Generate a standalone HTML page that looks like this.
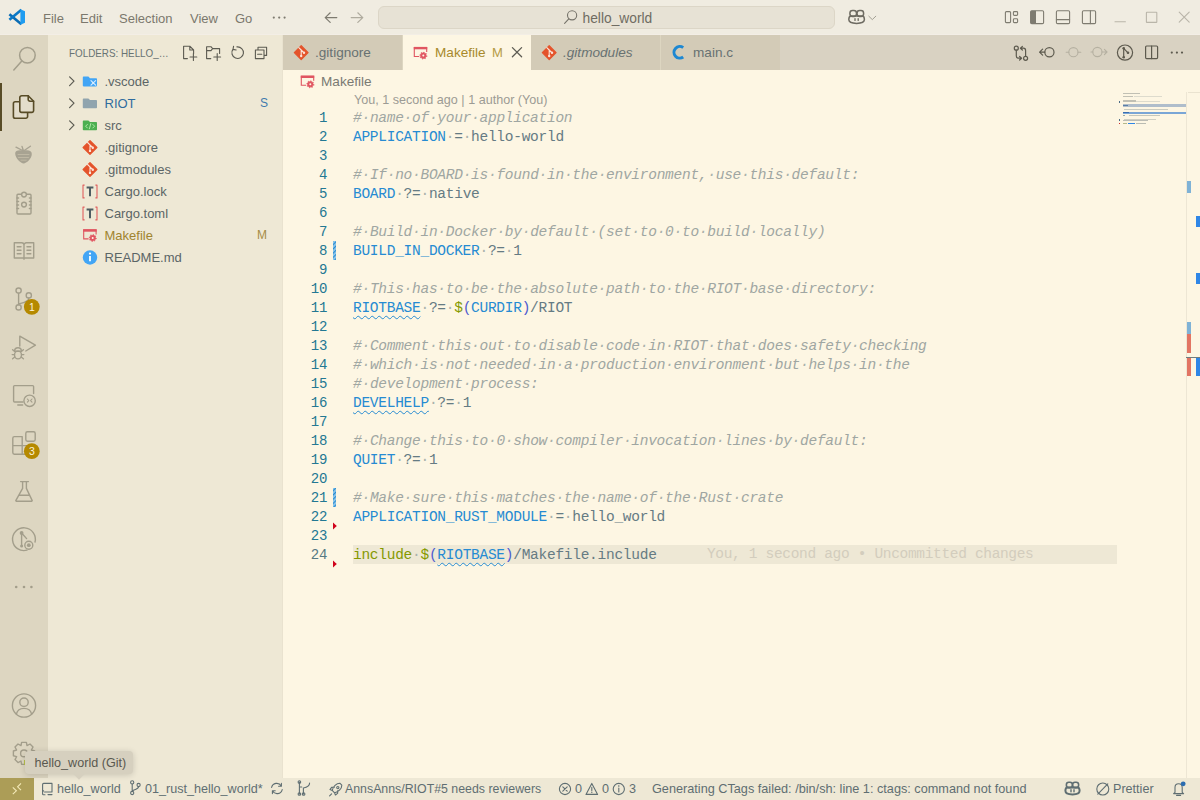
<!DOCTYPE html>
<html><head><meta charset="utf-8">
<style>
*{box-sizing:border-box;margin:0;padding:0}
html,body{width:1200px;height:800px;overflow:hidden;background:#FDF6E3;font-family:"Liberation Sans",sans-serif}
.a{position:absolute}
.t{position:absolute;white-space:pre;line-height:1;z-index:8}
svg{position:absolute;overflow:visible}
#title{left:0;top:0;width:1200px;height:35px;background:#F0ECE1;border-bottom:1px solid #F3EEE6}
.menu{color:#7B786D;font-size:13px;top:12px}
#act{left:0;top:35px;width:48px;height:743px;background:#DDD6C1}
#side{left:48px;top:35px;width:235px;height:743px;background:#EEE8D5;border-right:1px solid #E9E2CF}
#tabs{left:283px;top:35px;width:917px;height:35px;background:#D9D2C2}
.tab{position:absolute;top:0;height:35px;background:#D3CBB7;border-right:1px solid #DDD6C1}
.tabtxt{font-size:13.6px;color:#687272;top:11px}
#ed{left:283px;top:70px;width:917px;height:708px;background:#FDF6E3}
#status{left:0;top:778px;width:1200px;height:22px;background:#EEE8D5}
.st{font-size:12.6px;color:#5F6E72;top:5px}
.rowt{font-size:13px;color:#5B6566;left:56.5px}
.code{position:absolute;left:353px;font-family:"Liberation Mono",monospace;font-size:14.5px;line-height:19px;height:19px;white-space:pre;color:#657B83;letter-spacing:-0.27px}
.ln{position:absolute;left:290px;width:37.5px;text-align:right;font-family:"Liberation Mono",monospace;font-size:14px;line-height:19px;height:19px;color:#237893}
.ln.act{color:#567983}
.c{color:#9FA6A2;font-style:italic}
.v,.vu{color:#268BD2}
.vu{text-decoration:underline wavy #268BD2;text-decoration-thickness:1px;text-underline-offset:3px}
.w{color:#AAB2AC}
.wc{font-style:italic}
.g{color:#859900}
.p{color:#4D5BCF}
.o{color:#657B83}
</style></head><body>
<div id="title" class="a">
  <div class="t menu" style="left:43px">File</div>
  <div class="t menu" style="left:80px">Edit</div>
  <div class="t menu" style="left:119px">Selection</div>
  <div class="t menu" style="left:190px">View</div>
  <div class="t menu" style="left:235px">Go</div>
  <div class="a" style="left:378px;top:6px;width:457px;height:23px;background:#E7E2D5;border:1px solid #DCD6C7;border-radius:6px"></div>
  <div class="t" style="left:582.5px;top:12.3px;font-size:13.8px;color:#6F6C62">hello_world</div>
</div>
<div id="act" class="a">
  <div class="a" style="left:0;top:48px;width:2px;height:48px;background:#584C27"></div>
</div>
<div id="side" class="a">
  <div class="t" style="left:20.5px;top:13px;font-size:11.2px;transform:scaleX(0.88);transform-origin:0 0;color:#687373">FOLDERS: HELLO_…</div>
  <div class="t rowt" style="top:40px">.vscode</div>
  <div class="t rowt" style="top:62px;color:#2F6C9E">RIOT</div>
  <div class="t rowt" style="top:84px">src</div>
  <div class="t rowt" style="top:106px">.gitignore</div>
  <div class="t rowt" style="top:128px">.gitmodules</div>
  <div class="t rowt" style="top:150px">Cargo.lock</div>
  <div class="t rowt" style="top:172px">Cargo.toml</div>
  <div class="t rowt" style="top:194px;color:#A0842F">Makefile</div>
  <div class="t rowt" style="top:216px">README.md</div>
  <div class="t rowt" style="top:62px;left:212px;color:#3F7BAE;font-size:12px">S</div>
  <div class="t rowt" style="top:194px;left:209px;color:#A68C45;font-size:12px">M</div>
</div>
<div id="tabs" class="a">
  <div class="tab" style="left:0;width:120px"><div class="t tabtxt" style="left:32px">.gitignore</div></div>
  <div class="tab" style="left:120px;width:128px;background:#FDF6E3;border-right:none"><div class="t tabtxt" style="left:32px;color:#A88A2C">Makefile</div><div class="t tabtxt" style="left:89px;color:#B59A45;font-size:13px">M</div></div>
  <div class="tab" style="left:248px;width:130px"><div class="t tabtxt" style="left:32px;font-style:italic">.gitmodules</div></div>
  <div class="tab" style="left:378px;width:119px;border-right:none"><div class="t tabtxt" style="left:32px">main.c</div></div>
</div>
<div id="ed" class="a">
  <div class="t" style="left:38px;top:4.5px;font-size:13.6px;color:#7A7A73">Makefile</div>
  <div class="t" style="left:71px;top:24px;font-size:12.6px;color:#9C9B94">You, 1 second ago | 1 author (You)</div>
  <div class="a" style="left:70px;top:475px;width:764px;height:19px;background:#EEE8D5"></div>
</div>
<div class="ln" style="top:109.0px">1</div>
<div class="code" style="top:109.0px"><span class="c">#</span><span class="w wc">·</span><span class="c">name</span><span class="w wc">·</span><span class="c">of</span><span class="w wc">·</span><span class="c">your</span><span class="w wc">·</span><span class="c">application</span></div>
<div class="ln" style="top:128.0px">2</div>
<div class="code" style="top:128.0px"><span class="v">APPLICATION</span><span class="w">·</span><span class="o">=</span><span class="w">·</span><span class="o">hello-world</span></div>
<div class="ln" style="top:147.0px">3</div>
<div class="ln" style="top:166.0px">4</div>
<div class="code" style="top:166.0px"><span class="c">#</span><span class="w wc">·</span><span class="c">If</span><span class="w wc">·</span><span class="c">no</span><span class="w wc">·</span><span class="c">BOARD</span><span class="w wc">·</span><span class="c">is</span><span class="w wc">·</span><span class="c">found</span><span class="w wc">·</span><span class="c">in</span><span class="w wc">·</span><span class="c">the</span><span class="w wc">·</span><span class="c">environment,</span><span class="w wc">·</span><span class="c">use</span><span class="w wc">·</span><span class="c">this</span><span class="w wc">·</span><span class="c">default:</span></div>
<div class="ln" style="top:185.0px">5</div>
<div class="code" style="top:185.0px"><span class="v">BOARD</span><span class="w">·</span><span class="o">?=</span><span class="w">·</span><span class="o">native</span></div>
<div class="ln" style="top:204.0px">6</div>
<div class="ln" style="top:223.0px">7</div>
<div class="code" style="top:223.0px"><span class="c">#</span><span class="w wc">·</span><span class="c">Build</span><span class="w wc">·</span><span class="c">in</span><span class="w wc">·</span><span class="c">Docker</span><span class="w wc">·</span><span class="c">by</span><span class="w wc">·</span><span class="c">default</span><span class="w wc">·</span><span class="c">(set</span><span class="w wc">·</span><span class="c">to</span><span class="w wc">·</span><span class="c">0</span><span class="w wc">·</span><span class="c">to</span><span class="w wc">·</span><span class="c">build</span><span class="w wc">·</span><span class="c">locally)</span></div>
<div class="ln" style="top:242.0px">8</div>
<div class="code" style="top:242.0px"><span class="v">BUILD_IN_DOCKER</span><span class="w">·</span><span class="o">?=</span><span class="w">·</span><span class="o">1</span></div>
<div class="ln" style="top:261.0px">9</div>
<div class="ln" style="top:280.0px">10</div>
<div class="code" style="top:280.0px"><span class="c">#</span><span class="w wc">·</span><span class="c">This</span><span class="w wc">·</span><span class="c">has</span><span class="w wc">·</span><span class="c">to</span><span class="w wc">·</span><span class="c">be</span><span class="w wc">·</span><span class="c">the</span><span class="w wc">·</span><span class="c">absolute</span><span class="w wc">·</span><span class="c">path</span><span class="w wc">·</span><span class="c">to</span><span class="w wc">·</span><span class="c">the</span><span class="w wc">·</span><span class="c">RIOT</span><span class="w wc">·</span><span class="c">base</span><span class="w wc">·</span><span class="c">directory:</span></div>
<div class="ln" style="top:299.0px">11</div>
<div class="code" style="top:299.0px"><span class="vu">RIOTBASE</span><span class="w">·</span><span class="o">?=</span><span class="w">·</span><span class="g">$</span><span class="p">(</span><span class="v">CURDIR</span><span class="p">)</span><span class="o">/RIOT</span></div>
<div class="ln" style="top:318.0px">12</div>
<div class="ln" style="top:337.0px">13</div>
<div class="code" style="top:337.0px"><span class="c">#</span><span class="w wc">·</span><span class="c">Comment</span><span class="w wc">·</span><span class="c">this</span><span class="w wc">·</span><span class="c">out</span><span class="w wc">·</span><span class="c">to</span><span class="w wc">·</span><span class="c">disable</span><span class="w wc">·</span><span class="c">code</span><span class="w wc">·</span><span class="c">in</span><span class="w wc">·</span><span class="c">RIOT</span><span class="w wc">·</span><span class="c">that</span><span class="w wc">·</span><span class="c">does</span><span class="w wc">·</span><span class="c">safety</span><span class="w wc">·</span><span class="c">checking</span></div>
<div class="ln" style="top:356.0px">14</div>
<div class="code" style="top:356.0px"><span class="c">#</span><span class="w wc">·</span><span class="c">which</span><span class="w wc">·</span><span class="c">is</span><span class="w wc">·</span><span class="c">not</span><span class="w wc">·</span><span class="c">needed</span><span class="w wc">·</span><span class="c">in</span><span class="w wc">·</span><span class="c">a</span><span class="w wc">·</span><span class="c">production</span><span class="w wc">·</span><span class="c">environment</span><span class="w wc">·</span><span class="c">but</span><span class="w wc">·</span><span class="c">helps</span><span class="w wc">·</span><span class="c">in</span><span class="w wc">·</span><span class="c">the</span></div>
<div class="ln" style="top:375.0px">15</div>
<div class="code" style="top:375.0px"><span class="c">#</span><span class="w wc">·</span><span class="c">development</span><span class="w wc">·</span><span class="c">process:</span></div>
<div class="ln" style="top:394.0px">16</div>
<div class="code" style="top:394.0px"><span class="vu">DEVELHELP</span><span class="w">·</span><span class="o">?=</span><span class="w">·</span><span class="o">1</span></div>
<div class="ln" style="top:413.0px">17</div>
<div class="ln" style="top:432.0px">18</div>
<div class="code" style="top:432.0px"><span class="c">#</span><span class="w wc">·</span><span class="c">Change</span><span class="w wc">·</span><span class="c">this</span><span class="w wc">·</span><span class="c">to</span><span class="w wc">·</span><span class="c">0</span><span class="w wc">·</span><span class="c">show</span><span class="w wc">·</span><span class="c">compiler</span><span class="w wc">·</span><span class="c">invocation</span><span class="w wc">·</span><span class="c">lines</span><span class="w wc">·</span><span class="c">by</span><span class="w wc">·</span><span class="c">default:</span></div>
<div class="ln" style="top:451.0px">19</div>
<div class="code" style="top:451.0px"><span class="v">QUIET</span><span class="w">·</span><span class="o">?=</span><span class="w">·</span><span class="o">1</span></div>
<div class="ln" style="top:470.0px">20</div>
<div class="ln" style="top:489.0px">21</div>
<div class="code" style="top:489.0px"><span class="c">#</span><span class="w wc">·</span><span class="c">Make</span><span class="w wc">·</span><span class="c">sure</span><span class="w wc">·</span><span class="c">this</span><span class="w wc">·</span><span class="c">matches</span><span class="w wc">·</span><span class="c">the</span><span class="w wc">·</span><span class="c">name</span><span class="w wc">·</span><span class="c">of</span><span class="w wc">·</span><span class="c">the</span><span class="w wc">·</span><span class="c">Rust</span><span class="w wc">·</span><span class="c">crate</span></div>
<div class="ln" style="top:508.0px">22</div>
<div class="code" style="top:508.0px"><span class="v">APPLICATION_RUST_MODULE</span><span class="w">·</span><span class="o">=</span><span class="w">·</span><span class="o">hello_world</span></div>
<div class="ln" style="top:527.0px">23</div>
<div class="ln act" style="top:546.0px">24</div>
<div class="code" style="top:546.0px"><span class="g">include</span><span class="w">·</span><span class="g">$</span><span class="p">(</span><span class="vu">RIOTBASE</span><span class="p">)</span><span class="o">/Makefile.include</span></div>
<svg class="a" style="left:0;top:0;z-index:5" width="1200" height="800" fill="none" stroke-linecap="round" stroke-linejoin="round">
<g stroke="#A39E8B" stroke-width="1.5">
 <!-- search -->
 <circle cx="27.4" cy="55.3" r="7.8"/>
 <path d="M21.8,60.9 L13.8,69.9"/>
</g>
<!-- explorer -->
<g stroke="#584C27" stroke-width="1.6" fill="#E3DDCB">
 <path d="M19.8,101.8 H15.2 a1.8,1.8 0 0 0 -1.8,1.8 V116.4 a1.8,1.8 0 0 0 1.8,1.8 H25.8 a1.8,1.8 0 0 0 1.8,-1.8 V112.4"/>
 <path d="M21.6,95.8 H28.2 L33.6,101.2 V110.6 a1.8,1.8 0 0 1 -1.8,1.8 H21.6 a1.8,1.8 0 0 1 -1.8,-1.8 V97.6 a1.8,1.8 0 0 1 1.8,-1.8 Z"/>
 <path d="M28.2,95.8 V99.4 a1.8,1.8 0 0 0 1.8,1.8 H33.6" fill="none"/>
</g>
<!-- strawberry -->
<g fill="#A8A392" stroke="none">
 <path d="M15.2,153.2 C15.2,150.4 18.6,149.6 23.4,150.6 C28.2,149.6 31.8,150.2 31.8,154 C31.8,158.8 26.4,163.4 23.6,163.4 C20.8,163.4 15.2,158.4 15.2,153.2 Z"/>
</g>
<g stroke="#A8A392" stroke-width="1.4">
 <path d="M23.5,151 L16,147.2 M23.5,151 L22,146.4 M23.5,151 L30.4,146.2"/>
</g>
<g stroke="#C8C1AC" stroke-width="0.7">
 <path d="M18,154.5 L29,154.5 M18.5,157.5 L28.5,157.5 M21,160.2 L26.2,160.2"/>
</g>
<g stroke="#A39E8B" stroke-width="1.4">
 <!-- ruler clipboard -->
 <rect x="17" y="194.2" width="14" height="19.8" rx="1"/>
 <circle cx="24" cy="194.6" r="2.4" fill="#DDD6C1"/>
 <circle cx="24" cy="204.6" r="2.4"/>
 <path d="M17,198 h1.6 M17,201.5 h1.6 M17,205 h1.6 M17,208.5 h1.6 M31,198 h-1.6 M31,201.5 h-1.6 M31,205 h-1.6 M31,208.5 h-1.6"/>
 <!-- book -->
 <path d="M14.3,242.8 H21.8 a2.2,2.2 0 0 1 2.2,2.2 V258 H14.3 Z M24,245 a2.2,2.2 0 0 1 2.2,-2.2 H33.7 V258 H24 V259.2"/>
 <path d="M17.2,246.8 h3.8 M17.2,250.3 h3.8 M17.2,253.8 h3.8 M27,246.8 h3.8 M27,250.3 h3.8 M27,253.8 h3.8"/>
 <!-- source control -->
 <circle cx="18.6" cy="290.6" r="2.6"/>
 <circle cx="28.8" cy="295.4" r="2.6"/>
 <circle cx="18.6" cy="307.4" r="2.6"/>
 <path d="M18.6,293.2 V304.8 M28.8,298 C28.8,302 24,302.5 18.8,303.8"/>
 <!-- run debug -->
 <path d="M19.8,346 V336.2 L35.4,345.2 L25.8,351"/>
 <ellipse cx="18" cy="355" rx="3.5" ry="3.9"/>
 <path d="M14.6,351.2 a3.4,3.4 0 0 1 6.8,0 Z M12.6,349.8 l2,1.6 M23.4,349.8 l-2,1.6 M12.2,354.6 h2.3 M21.5,354.6 h2.3 M12.6,358.8 l2.2,-1.8 M23.4,358.8 l-2.2,-1.8"/>
 <!-- remote explorer -->
 <path d="M23,402 H14.6 a1,1 0 0 1 -1,-1 V386.6 a1,1 0 0 1 1,-1 H32.6 a1,1 0 0 1 1,1 V393.6"/>
 <path d="M17.8,405 H22.6"/>
 <circle cx="29.6" cy="400.8" r="5.7" fill="#DDD6C1"/>
 <path d="M27.4,399 l1.4,1.6 l-1.4,1.6 M32,399 l-1.4,1.6 l1.4,1.6" stroke-width="1.1"/>
 <!-- extensions -->
 <path d="M22.2,436.6 H14.4 a1.6,1.6 0 0 0 -1.6,1.6 V452.6 a1.6,1.6 0 0 0 1.6,1.6 H29 M12.8,445.6 H30 M22.2,436.6 V454.2"/>
 <rect x="25.8" y="431.8" width="9.4" height="9.4" rx="1.6"/>
 <!-- flask -->
 <path d="M20.6,481.6 H28.4 M22.6,481.6 V488.4 L15.8,500.6 a0.5,0.5 0 0 0 0.4,0.6 H31.8 a0.5,0.5 0 0 0 0.4,-0.6 L26.4,488.4 V481.6 M18.8,495.2 H29.2"/>
 <!-- gitlens -->
 <path d="M35,542 A11.4,11.4 0 1 0 27,550.2"/>
 <path d="M21.6,533 V546 M21.6,533 L26.6,538.6"/>
 <circle cx="28.8" cy="545.2" r="4"/>
</g>
<g fill="#A39E8B">
 <circle cx="21.6" cy="533" r="1.9"/>
 <circle cx="21.6" cy="546" r="1.5"/>
 <circle cx="28.8" cy="545.2" r="1.9"/>
 <circle cx="16.2" cy="587" r="1.3"/><circle cx="24" cy="587" r="1.3"/><circle cx="31.4" cy="587" r="1.3"/>
</g>
<g stroke="#A39E8B" stroke-width="1.4">
 <!-- account -->
 <circle cx="24" cy="705.5" r="11.6"/>
 <circle cx="24" cy="702.2" r="4.2"/>
 <path d="M16.4,714 C17.4,710 20.4,708.4 24,708.4 C27.6,708.4 30.6,710 31.6,714"/>
 <!-- gear -->
 <path d="M21.6,742.4 L26.4,742.4 L27,745.6 L30,744 L33,747 L31.4,750 L34.6,751 V755.8 L31.4,756.6 L33,759.6 L30,762.6 L27,761 L26.4,764.4 H21.6 L21,761 L18,762.6 L15,759.6 L16.6,756.6 L13.4,755.8 V751 L16.6,750 L15,747 L18,744 L21,745.6 Z"/>
 <circle cx="24" cy="753.4" r="3.4"/>
</g>
<!-- badges -->
<circle cx="31.8" cy="306.8" r="7.9" fill="#B58900"/>
<circle cx="31.8" cy="451.2" r="7.9" fill="#B58900"/>
<text x="31.8" y="310.6" font-family="Liberation Sans" font-size="10.5" fill="#FBF3DC" text-anchor="middle">1</text>
<text x="31.8" y="455" font-family="Liberation Sans" font-size="10.5" fill="#FBF3DC" text-anchor="middle">3</text>
</svg>

<svg class="a" style="left:0;top:0;z-index:6" width="1200" height="800" fill="none" stroke-linecap="round" stroke-linejoin="round">
<!-- vscode logo -->
<path d="M9.4,14.2 L21.4,24.2" stroke="#0A6CB4" stroke-width="2.6" stroke-linecap="butt"/>
<path d="M9.4,19.8 L21.4,9.8" stroke="#0B78C6" stroke-width="2.6" stroke-linecap="butt"/>
<path d="M20.4,9.2 L25,11.2 V22.8 L20.4,24.8 Z" fill="#1F9CF0"/>
<!-- back/forward -->
<path d="M336.8,17.6 H325.2 M330.2,12.8 L325.2,17.6 L330.2,22.4" stroke="#7E7B70" stroke-width="1.2"/>
<path d="M351.2,17.6 H362.8 M357.8,12.8 L362.8,17.6 L357.8,22.4" stroke="#AFAB9E" stroke-width="1.2"/>
<!-- menu dots -->
<g fill="#7E7B70"><circle cx="273.8" cy="17.6" r="1.1"/><circle cx="279.2" cy="17.6" r="1.1"/><circle cx="284.6" cy="17.6" r="1.1"/></g>
<!-- search in command center -->
<circle cx="572.1" cy="15.3" r="4.6" stroke="#76736A" stroke-width="1.1"/>
<path d="M568.8,18.8 L564.6,23.4" stroke="#76736A" stroke-width="1.1"/>
<!-- copilot -->
<g stroke="#6E6B62" stroke-width="1.5">
<rect x="849.9" y="10.6" width="6.6" height="5.8" rx="2.6"/>
<rect x="857" y="10.6" width="6.6" height="5.8" rx="2.6"/>
<path d="M848.8,19.6 C848.8,17 849.8,16 851.2,16 H862.2 C863.6,16 864.4,17 864.4,19.6 C864.4,22.4 860.6,23.4 856.6,23.4 C852.6,23.4 848.8,22.4 848.8,19.6 Z"/>
<path d="M855,18.6 V20.4 M858.2,18.6 V20.4" stroke-width="1.3"/>
</g>
<path d="M868.8,16.2 L872.3,19.6 L875.8,16.2" stroke="#A29F93" stroke-width="1"/>
<!-- layout icons -->
<g stroke="#7E7B70" stroke-width="1.1">
<rect x="1005.4" y="11.6" width="5.2" height="11" rx="1"/>
<rect x="1013.4" y="11.6" width="4.2" height="3.8" rx="0.9"/>
<rect x="1013.4" y="18.8" width="4.2" height="3.8" rx="0.9"/>
<rect x="1030.6" y="10.8" width="13" height="12.8" rx="1.2"/>
<rect x="1056.4" y="10.8" width="13.2" height="12.8" rx="1.2"/>
<path d="M1056.4,19.6 H1069.6"/>
<rect x="1082.4" y="10.8" width="13.2" height="12.8" rx="1.2"/>
<path d="M1090.4,10.8 V23.6"/>
</g>
<path d="M1030.6,12 a1.2,1.2 0 0 1 1.2,-1.2 H1036 V23.6 H1031.8 a1.2,1.2 0 0 1 -1.2,-1.2 Z" fill="#7E7B70"/>
<!-- window controls -->
<g stroke="#B9B5A9" stroke-width="1.1">
<path d="M1115,21.8 H1125.4"/>
<rect x="1146.4" y="12.2" width="10.4" height="10.2" rx="0.5"/>
<path d="M1179.2,12.2 L1189.2,22.2 M1189.2,12.2 L1179.2,22.2"/>
</g>
<!-- sidebar title icons -->
<g stroke="#5C5B52" stroke-width="1.1">
<path d="M187.4,58.6 H183.6 V46.2 H189.8 L193.6,50 V53.4 M189.8,46.2 V50 H193.6"/>
<path d="M193.4,53.6 V60.4 M190,57 H196.8"/>
<path d="M210.8,58.6 H206.6 V46.8 H211.2 L212.6,48.6 H219.6 V53.4 M206.6,50.6 H211 L212.6,48.6"/>
<path d="M217.2,53.6 V60.4 M213.8,57 H220.6"/>
<path d="M233,49.2 A5.8,5.8 0 1 0 236.9,46.9 M233.6,46.2 L233,49.4 L236.2,50"/>
<path d="M258,50 V47.2 H266.6 V55.4 H264 M255.4,50 H264 V58.6 H255.4 Z M257.6,54.3 H261.8"/>
</g>
<!-- chevrons -->
<g stroke="#5C5B52" stroke-width="1.2">
<path d="M69.6,76.8 L74,81.2 L69.6,85.6"/>
<path d="M69.6,98.8 L74,103.2 L69.6,107.6"/>
<path d="M69.6,120.8 L74,125.2 L69.6,129.6"/>
</g>
<!-- folders -->
<path d="M82.8,77.4 a0.8,0.8 0 0 1 0.8,-0.8 H88.4 L90,78.2 H96.2 a0.8,0.8 0 0 1 0.8,0.8 V85.6 a0.8,0.8 0 0 1 -0.8,0.8 H83.6 a0.8,0.8 0 0 1 -0.8,-0.8 Z" fill="#42A5F5"/>
<path d="M91,80.6 L95.6,85.2 M95.6,80.6 L91,85.2" stroke="#D6ECFF" stroke-width="1.2"/>
<path d="M82.8,99.2 a0.8,0.8 0 0 1 0.8,-0.8 H88.4 L90,100 H96.2 a0.8,0.8 0 0 1 0.8,0.8 V107.4 a0.8,0.8 0 0 1 -0.8,0.8 H83.6 a0.8,0.8 0 0 1 -0.8,-0.8 Z" fill="#90A4AE"/>
<path d="M82.8,121.2 a0.8,0.8 0 0 1 0.8,-0.8 H88.4 L90,122 H96.2 a0.8,0.8 0 0 1 0.8,0.8 V129.4 a0.8,0.8 0 0 1 -0.8,0.8 H83.6 a0.8,0.8 0 0 1 -0.8,-0.8 Z" fill="#4CAF50"/>
<path d="M87.4,124.4 L85.6,126.2 L87.4,128 M90.8,123.6 L89.4,128.8 M92.8,124.4 L94.6,126.2 L92.8,128" stroke="#B9F0B0" stroke-width="0.9"/>
<!-- file icons sidebar -->
<defs>
<g id="git">
 <path d="M0,-6.9 L6.9,0 L0,6.9 L-6.9,0 Z" fill="#E4532B" stroke="#E4532B" stroke-width="1.2" stroke-linejoin="round"/>
 <path d="M-2.4,-5 L0,-2.6 V3.2 M0,-2.6 L2.6,0" stroke="#FCE3D8" stroke-width="1.1"/>
 <circle cx="0" cy="3.4" r="1.2" fill="#FCE3D8"/>
 <circle cx="2.8" cy="0.2" r="1.2" fill="#FCE3D8"/>
</g>
<g id="toml">
 <path d="M-5.4,-6.4 H-7 V6.4 H-5.4 M5.4,-6.4 H7 V6.4 H5.4" stroke="#E06060" stroke-width="1.1" stroke-linecap="butt"/>
 <path d="M-3.4,-4 H3.4 M0,-4 V4.8" stroke="#4E5D62" stroke-width="2" stroke-linecap="butt"/>
</g>
<g id="make">
 <path d="M-1.4,3.4 H-6.3 V-5.6 H6.1 V-1" stroke="#E05561" stroke-width="1.1" stroke-linecap="butt" stroke-linejoin="miter"/>
 <path d="M-6.8,-6.2 H6.6 V-3.8 H-6.8 Z" fill="#E05561"/>
 <path d="M6.33,3.22 L4.86,3.94 L4.76,5.58 L3.21,5.05 L1.98,6.13 L1.26,4.66 L-0.38,4.56 L0.15,3.01 L-0.93,1.78 L0.54,1.06 L0.64,-0.58 L2.19,-0.05 L3.42,-1.13 L4.14,0.34 L5.78,0.44 L5.25,1.99 Z" fill="#E05561" stroke="#E05561" stroke-width="0.6"/>
 <circle cx="2.7" cy="2.5" r="1" fill="#FDF6E3"/>
</g>
</defs>
<use href="#git" x="90" y="147.5"/>
<use href="#git" x="90" y="169.5"/>
<use href="#toml" x="90" y="191.5"/>
<use href="#toml" x="90" y="213.5"/>
<use href="#make" x="90" y="235.5"/>
<circle cx="90" cy="257.5" r="7.2" fill="#42A5F5"/>
<path d="M90,256 V261.2" stroke="#FFFFFF" stroke-width="1.8" stroke-linecap="butt"/>
<circle cx="90" cy="253.6" r="1.1" fill="#FFFFFF"/>
<!-- tabs icons -->
<use href="#git" x="301.2" y="52.6"/>
<use href="#make" x="420.6" y="53.1"/>
<use href="#git" x="549.2" y="52.6"/>
<path d="M683.2,47.6 A5.8,5.8 0 1 0 683.2,57" stroke="#1E88D2" stroke-width="3" stroke-linecap="butt"/>
<path d="M512.4,47.6 L521.6,56.8 M521.6,47.6 L512.4,56.8" stroke="#5E5C53" stroke-width="1.3"/>
<!-- breadcrumb icon -->
<use href="#make" x="307.6" y="81.8"/>
<!-- editor actions -->
<g stroke="#5D5A4E" stroke-width="1.2">
<circle cx="1016.3" cy="48.2" r="2"/>
<circle cx="1025.6" cy="58.3" r="2"/>
<path d="M1016.3,50.2 V56 a2.2,2.2 0 0 0 2.2,2.2 H1021.4 M1019.6,56.4 L1021.6,58.2 L1019.6,60"/>
<path d="M1025.6,56.3 V50.4 a2.2,2.2 0 0 0 -2.2,-2.2 H1020.6 M1022.4,46.4 L1020.4,48.2 L1022.4,50"/>
<circle cx="1049.4" cy="52.2" r="4.6"/>
<path d="M1044.8,52.2 H1039.6 M1042.6,49.2 L1039.6,52.2 L1042.6,55.2"/>
</g>
<g stroke="#B5B0A1" stroke-width="1.1">
<circle cx="1073.4" cy="52.2" r="4.6"/>
<path d="M1068.8,52.2 H1066.2 M1078,52.2 H1080.8"/>
<circle cx="1097.4" cy="52" r="4.6"/>
<path d="M1092.8,52 H1091 M1102,52 H1107 M1104.4,49.4 L1107,52 L1104.4,54.6"/>
</g>
<g stroke="#5D5A4E" stroke-width="1.2">
<circle cx="1125" cy="52.6" r="7.6"/>
<path d="M1123.7,48.3 V57.2 M1123.7,48.3 L1128,52.8"/>
<rect x="1145.6" y="46" width="12" height="12.6" rx="1"/>
<path d="M1151.6,46 V58.6"/>
</g>
<g fill="#5D5A4E">
<circle cx="1123.7" cy="48.3" r="1.3"/><circle cx="1123.7" cy="57.2" r="1.3"/><circle cx="1128" cy="52.8" r="1.3"/>
<circle cx="1171.8" cy="52.6" r="1.1"/><circle cx="1176.9" cy="52.6" r="1.1"/><circle cx="1182" cy="52.6" r="1.1"/>
</g>
<!-- gutter decorations -->
<defs><pattern id="stripe" width="3" height="3" patternUnits="userSpaceOnUse" patternTransform="rotate(-45)"><rect width="3" height="1.6" fill="#268BD2"/><rect y="1.6" width="3" height="1.4" fill="#8EC8EE"/></pattern></defs>
<rect x="333" y="241" width="3" height="19" fill="url(#stripe)"/>
<rect x="333" y="488" width="3" height="19" fill="url(#stripe)"/>
<path d="M333,522.6 L336.8,526 L333,529.4 Z" fill="#D0021B"/>
<path d="M333,560.6 L336.8,564 L333,567.4 Z" fill="#D0021B"/>
<!-- status bar icons -->
<path d="M12.8,787.4 L16.4,790.8 L12.8,794.2 M21,783.4 L17.6,786.8 L21,790.2" stroke="#F4EAB8" stroke-width="1.1" stroke-linecap="butt" stroke-linejoin="miter"/>
<g stroke="#5F6E72" stroke-width="1.1">
<path d="M44.6,792 H52 V783.4 H43.6 a1,1 0 0 0 -1,1 V794 a0.8,0.8 0 0 0 0.8,0.8 H45 M48,794.6 H52 M42.6,791.8 a1,1 0 0 1 1,-0.9"/>
<circle cx="132.2" cy="782.4" r="1.6"/><circle cx="132.2" cy="793" r="1.6"/><circle cx="138.6" cy="785" r="1.6"/>
<path d="M132.2,784 V791.4 M138.6,786.6 C138.6,789.6 134,789 132.4,791"/>
<path d="M271.6,787.4 A5.2,5.2 0 0 1 281.2,786 M282.2,789.6 A5.2,5.2 0 0 1 272.6,791 M281.4,783.4 V786.2 H278.6 M272.4,793.6 V790.8 H275.2"/>
<path d="M299.4,782 V794 M299.4,787 H301.8 M303.4,788 V794 M303.4,788 C307,787.4 309.6,785.6 309.6,783"/>
<circle cx="299.4" cy="782" r="1.3"/><circle cx="299.4" cy="794" r="1.3"/><circle cx="303.6" cy="794" r="1.3"/>
<path d="M339.8,783.2 C336.4,783.2 333,786.4 332.2,790.4 L334.6,792.8 C338.6,792 341.8,788.6 341.8,785.2 Z M332.2,790.4 L330,789.6 L331.6,787.4 L334.4,787.2 M334.6,792.8 L335.4,795 L337.6,793.4 L337.8,790.6 M331.6,793.8 L329.6,795.8"/>
<circle cx="337.8" cy="787.6" r="1.1"/>
<circle cx="565" cy="789" r="5.6"/>
<path d="M562.8,786.8 L567.2,791.2 M567.2,786.8 L562.8,791.2"/>
<path d="M591.8,783.4 L597.6,794.4 H586 Z M591.8,787.4 V790.4"/>
<circle cx="618.8" cy="789" r="5.6"/>
<path d="M618.8,788 V792"/>
<path d="M1097.8,794.2 L1107.8,783.8"/>
<circle cx="1102.8" cy="789" r="6"/>
<path d="M1175,792.4 V787.4 a3.6,3.6 0 0 1 7.2,0 V792.4 L1183.6,793.6 H1173.6 Z M1176.6,795.4 H1180.6"/>
</g>
<g fill="#5F6E72">
<circle cx="591.8" cy="792.2" r="0.7"/>
<circle cx="618.8" cy="786" r="0.8"/>
<circle cx="1183.2" cy="783.8" r="2.4" fill="#2B6CB0"/>
</g>
<!-- status copilot -->
<g stroke="#5F6E72" stroke-width="1.6">
<rect x="1066.4" y="782.2" width="6" height="5.4" rx="2.4"/>
<rect x="1072.6" y="782.2" width="6" height="5.4" rx="2.4"/>
<path d="M1065.4,790.8 C1065.4,788.4 1066.4,787.4 1067.6,787.4 H1077.4 C1078.6,787.4 1079.6,788.4 1079.6,790.8 C1079.6,793.4 1076.2,794.4 1072.5,794.4 C1068.8,794.4 1065.4,793.4 1065.4,790.8 Z" stroke-width="2"/>
</g>
<path d="M1071,789.8 V791.8 M1074,789.8 V791.8" stroke="#5F6E72" stroke-width="1.4"/>
</svg>

<div class="a" style="left:1186px;top:92px;width:1px;height:686px;background:#EDE6D4;z-index:3"></div>
<div class="a" style="left:1187px;top:181px;width:4px;height:12px;background:#7FB2D6;z-index:3"></div>
<div class="a" style="left:1196px;top:216px;width:4px;height:11px;background:#2F86E6;z-index:3"></div>
<div class="a" style="left:1196px;top:272.5px;width:4px;height:11.5px;background:#2F86E6;z-index:3"></div>
<div class="a" style="left:1187px;top:322px;width:4px;height:11.6px;background:#7FB2D6;z-index:3"></div>
<div class="a" style="left:1187px;top:333.6px;width:4px;height:19.3px;background:#E27563;z-index:3"></div>
<div class="a" style="left:1186px;top:356.5px;width:14px;height:1.5px;background:#6F7C80;z-index:3"></div>
<div class="a" style="left:1187px;top:358px;width:4px;height:17.7px;background:#E27563;z-index:3"></div>
<div class="a" style="left:1196px;top:358px;width:4px;height:17.7px;background:#2F86E6;z-index:3"></div>
<!-- minimap -->
<div class="a" style="left:1188px;top:92px;width:12px;height:1px;background:#EAE3D0;z-index:3"></div>
<div class="a" style="left:1122.7px;top:92.5px;width:17px;height:1.2px;background:#9A9C95;opacity:.6;z-index:3"></div>
<div class="a" style="left:1122.7px;top:96px;width:10px;height:1.2px;background:#9A9C95;opacity:.6;z-index:3"></div>
<div class="a" style="left:1134px;top:96.2px;width:28px;height:0.8px;background:#C8C9BE;opacity:.6;z-index:3"></div>
<div class="a" style="left:1122.7px;top:100.4px;width:13px;height:1.2px;background:#9A9C95;opacity:.6;z-index:3"></div>
<div class="a" style="left:1136px;top:100.6px;width:24px;height:0.8px;background:#C8C9BE;opacity:.6;z-index:3"></div>
<div class="a" style="left:1122.7px;top:104.4px;width:63.3px;height:2.4px;background:#AFBDCB;z-index:3"></div>
<div class="a" style="left:1123px;top:104.8px;width:5px;height:1.6px;background:#5B7FA6;z-index:3"></div>
<div class="a" style="left:1124px;top:108.6px;width:44px;height:1.2px;background:#C9CBC0;z-index:3"></div>
<div class="a" style="left:1122.7px;top:111.8px;width:63.3px;height:1.8px;background:#7AA6D6;z-index:3"></div>
<div class="a" style="left:1123px;top:112px;width:6px;height:1.4px;background:#3C6FB0;z-index:3"></div>
<div class="a" style="left:1122.7px;top:114.6px;width:2px;height:1.2px;background:#9AA;z-index:3"></div>
<div class="a" style="left:1129px;top:114.8px;width:31px;height:0.8px;background:#C5C7BC;z-index:3"></div>
<div class="a" style="left:1124px;top:118.6px;width:32px;height:0.8px;background:#CFCFC3;z-index:3"></div>
<div class="a" style="left:1122.7px;top:120px;width:25px;height:1.3px;background:#8F9696;opacity:.6;z-index:3"></div>
<div class="a" style="left:1122.7px;top:122.8px;width:4px;height:1.2px;background:#B5B98A;z-index:3"></div>
<div class="a" style="left:1128px;top:122.6px;width:7px;height:1.5px;background:#2F86E6;z-index:3"></div>
<div class="a" style="left:1136px;top:122.8px;width:10px;height:1px;background:#B9BBB2;z-index:3"></div>
<div class="a" style="left:1118.6px;top:101px;width:1.6px;height:1.8px;background:#4C6C86;z-index:3"></div>
<div class="a" style="left:1118.6px;top:118.8px;width:1.6px;height:1.8px;background:#4C6C86;z-index:3"></div>
<div class="a" style="left:1118.6px;top:122.6px;width:1.6px;height:1.6px;background:#D02A2A;z-index:3"></div>

<div class="code" style="top:545.3px;left:707px;color:#D3CDBD;letter-spacing:-0.33px">You, 1 second ago • Uncommitted changes</div>
<div id="status" class="a">
  <div class="a" style="left:0;top:0;width:34px;height:22px;background:#AC9D57"></div>
  <div class="t st" style="left:57px">hello_world</div>
  <div class="t st" style="left:145px">01_rust_hello_world*</div>
  <div class="t st" style="left:345px;font-size:12.35px">AnnsAnns/RIOT#5 needs reviewers</div>
  <div class="t st" style="left:575px">0</div>
  <div class="t st" style="left:602px">0</div>
  <div class="t st" style="left:629px">3</div>
  <div class="t st" style="left:652px;font-size:12.7px">Generating CTags failed: /bin/sh: line 1: ctags: command not found</div>
  <div class="t st" style="left:1113px">Prettier</div>
</div>
<div class="a" style="left:25px;top:751px;width:108px;height:23px;background:#D6D0BF;border-radius:4px;box-shadow:0 1px 6px rgba(0,0,0,0.16);z-index:20"></div>
<div class="a" style="left:75px;top:770px;width:8px;height:8px;background:#D6D0BF;transform:rotate(45deg);z-index:20"></div>
<div class="t" style="left:34.5px;top:757px;font-size:12.6px;color:#5A584F;z-index:21">hello_world (Git)</div>
<div class="a" style="left:24px;top:759.5px;width:2px;height:5.5px;background:#B9C24C;z-index:9"></div>
</body></html>
